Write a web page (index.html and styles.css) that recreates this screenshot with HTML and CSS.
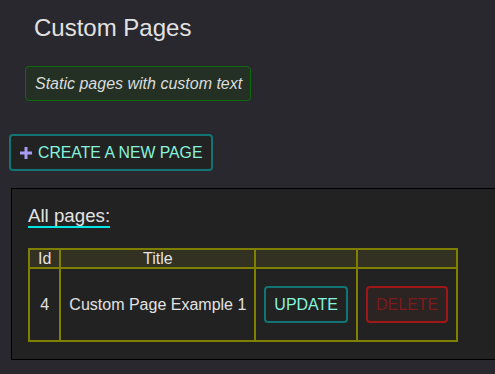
FILE: index.html
```html
<!DOCTYPE html>
<html lang="en">
<head>
  <meta charset="UTF-8">
  <meta name="viewport" content="width=device-width, initial-scale=1.0">
  <title>Custom Pages</title>
  <link rel="stylesheet" href="styles.css">
</head>
<body>
  <h1 class="page-title">Custom Pages</h1>
  <div class="page-info">Static pages with custom text</div>

  <div class="actions">
    <a href="#" class="button button-create">
      <svg class="plus" width="14" height="14" viewBox="0 0 14 14">
        <path d="M7 1v12M1 7h12" stroke="#a99cf2" stroke-width="3" fill="none"/>
      </svg>
      Create a new page
    </a>
  </div>

  <div class="panel">
    <h2 class="panel-title"><span>All pages:</span></h2>
    <table class="pages">
      <thead>
        <tr>
          <th>Id</th>
          <th>Title</th>
          <th></th>
          <th></th>
        </tr>
      </thead>
      <tbody>
        <tr>
          <td class="id">4</td>
          <td>Custom Page Example 1</td>
          <td><a href="#" class="button button-update">Update</a></td>
          <td><a href="#" class="button button-delete">Delete</a></td>
        </tr>
      </tbody>
    </table>
  </div>
</body>
</html>
```

FILE: styles.css
```css
html {
  overflow: hidden;
}
body {
  font-family: "Liberation Sans", Arial, sans-serif;
  margin: 0;
  padding: 0;
  background-color: #29282e;
  color: #e2e2e2;
}
.page-title {
  font-size: 24px;
  font-weight: normal;
  line-height: 28px;
  margin: 14px 0 0 34px;
}
.page-info {
  width: fit-content;
  margin: 24px 0 0 25px;
  padding: 7px 8px 7px 9px;
  line-height: 19px;
  font-size: 16px;
  font-style: italic;
  color: #dcdcdc;
  background-color: #243024;
  border: 1px solid #0b6b0b;
  border-radius: 4px;
}
.actions {
  display: flex;
  margin: 33px 0 0 9px;
}
.button {
  display: inline-flex;
  align-items: center;
  gap: 5px;
  padding: 7px 8px;
  line-height: 19px;
  font-size: 16px;
  text-transform: uppercase;
  text-decoration: none;
  border: 2px solid #0f7575;
  border-radius: 4px;
  color: #86f4dc;
  background-color: #222;
}
.button-create {
  padding: 7px 9px 7px 8px;
  font-size: 15.8px;
}
.plus {
  display: block;
}
.button-delete {
  color: #7e1b1b;
  border-color: #a11616;
  background-color: #2c2323;
}
.panel {
  margin: 17px -20px 0 11px;
  padding: 16px 16px 17px;
  background-color: #222222;
  border: 1px solid #000;
}
.panel-title {
  margin: 0 0 20px 0;
  font-size: 18.7px;
  font-weight: normal;
  line-height: 21px;
}
.panel-title span {
  display: inline-block;
  border-bottom: 2px solid #00e5e5;
}
.pages {
  border-collapse: collapse;
  border: 2px solid #808000;
  font-size: 16px;
  color: #e2e2e2;
}
.pages th,
.pages td {
  border: 2px solid #808000;
  padding: 0 8px;
}
.pages th {
  font-weight: normal;
  line-height: 17px;
  background-color: #323122;
}
.pages td {
  padding: 17px 8px;
}
.pages td.id {
  text-align: center;
}
```
